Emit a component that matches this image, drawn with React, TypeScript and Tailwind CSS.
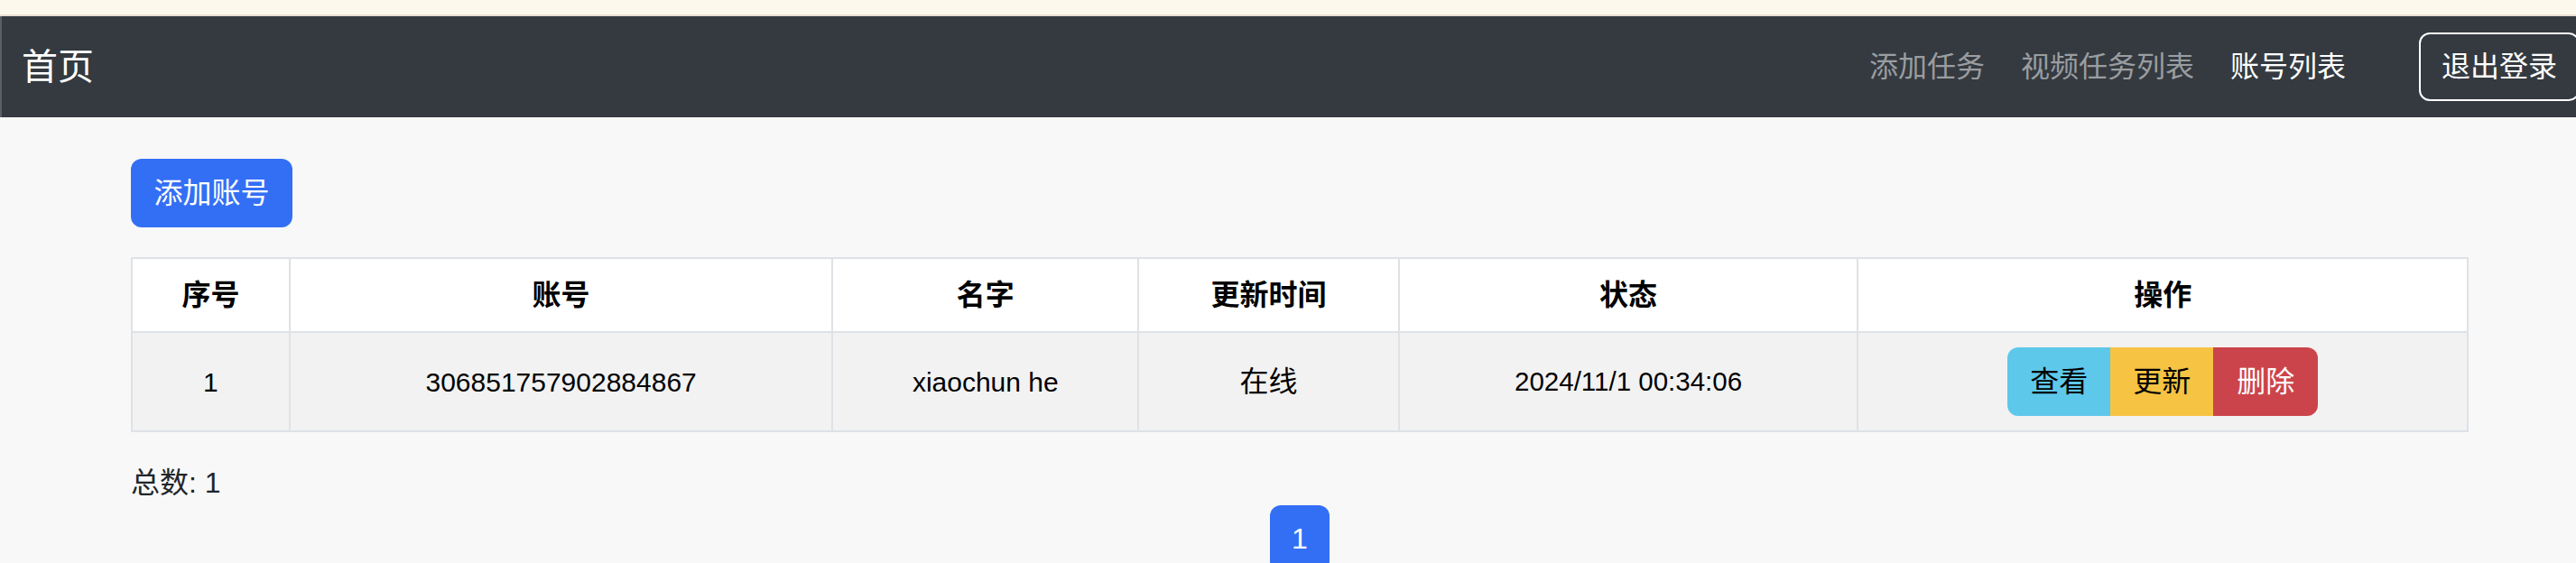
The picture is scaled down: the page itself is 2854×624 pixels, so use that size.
import * as React from "react";

const font = "font-['Liberation_Sans','Noto_Sans_CJK_SC',sans-serif]";

const columns = [
  { title: "序号", w: "w-[175px]" },
  { title: "账号", w: "w-[602px]" },
  { title: "名字", w: "w-[339px]" },
  { title: "更新时间", w: "w-[289px]" },
  { title: "状态", w: "w-[509px]" },
  { title: "操作", w: "w-[676px]" },
];

const rows = [
  { idx: "1", account: "306851757902884867", name: "xiaochun he", status: "在线", time: "2024/11/1 00:34:06" },
];

export default function App() {
  return (
    <div className={`${font} w-[2854px] h-[624px] overflow-hidden bg-[#f8f8f8] text-[#212529]`}>
      {/* 顶部提示条 */}
      <div className="h-[18px] bg-[#fdf8ec] border-b-2 border-[#e8e0d2]" />

      {/* 导航栏 */}
      <nav className="h-[112px] bg-[#343a40] border-l-2 border-[#5a5f64] flex items-center pl-[22px]">
        <span className="text-[40px] text-white leading-none">首页</span>
        <div className="ml-auto flex items-center">
          <a className="px-[20px] text-[32px] text-[#9a9da0]">添加任务</a>
          <a className="px-[20px] text-[32px] text-[#9a9da0]">视频任务列表</a>
          <a className="px-[20px] text-[32px] text-white">账号列表</a>
          <button className="ml-[61px] h-[76px] px-[23px] border-2 border-white rounded-[12px] text-[32px] text-white whitespace-nowrap shrink-0 -mr-[4px]">
            退出登录
          </button>
        </div>
      </nav>

      {/* 主体 */}
      <div className="ml-[145px] w-[2590px] pt-[46px]">
        <button className="h-[76px] w-[179px] bg-[#336ff5] rounded-[12px] text-white text-[32px]">
          添加账号
        </button>

        <table className="mt-[33px] w-full border-collapse border-2 border-[#dee2e6] text-[32px] text-black">
          <thead>
            <tr className="h-[82px] bg-white">
              {columns.map((c) => (
                <th key={c.title} className={`${c.w} border-2 border-[#dee2e6] font-bold text-center`}>
                  {c.title}
                </th>
              ))}
            </tr>
          </thead>
          <tbody>
            {rows.map((r) => (
              <tr key={r.idx} className="h-[110px] bg-[#f2f2f2]">
                <td className="border-2 border-[#dee2e6] text-center text-[30px]">{r.idx}</td>
                <td className="border-2 border-[#dee2e6] text-center text-[30px]">{r.account}</td>
                <td className="border-2 border-[#dee2e6] text-center text-[30px]">{r.name}</td>
                <td className="border-2 border-[#dee2e6] text-center">{r.status}</td>
                <td className="border-2 border-[#dee2e6] text-center text-[29.5px]">{r.time}</td>
                <td className="border-2 border-[#dee2e6] text-center">
                  <div className="inline-flex align-middle">
                    <button className="h-[76px] w-[114px] bg-[#5ec8eb] text-black rounded-l-[12px]">查看</button>
                    <button className="h-[76px] w-[114px] bg-[#f6c343] text-black">更新</button>
                    <button className="h-[76px] w-[116px] bg-[#cc444b] text-white rounded-r-[12px]">删除</button>
                  </div>
                </td>
              </tr>
            ))}
          </tbody>
        </table>

        <div className="mt-[32px] text-[32px] leading-[48px]">总数: 1</div>

        <div className="flex justify-center mt-[1px]">
          <button className="h-[74px] w-[66px] bg-[#336ff5] rounded-[12px] text-white text-[32px] flex items-center justify-center">
            1
          </button>
        </div>
      </div>
    </div>
  );
}
